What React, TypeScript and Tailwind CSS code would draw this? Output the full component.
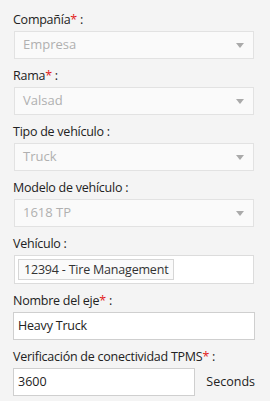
const selects = [
  { label: "Compañía", required: true, value: "Empresa" },
  { label: "Rama", required: true, value: "Valsad" },
  { label: "Tipo de vehículo", required: false, value: "Truck" },
  { label: "Modelo de vehículo", required: false, value: "1618 TP" },
];

const Label = ({ text, required }: { text: string; required?: boolean }) => (
  <div className="h-[18px] leading-[18px] mb-[2px] text-[#222] text-[12.5px] tracking-[-0.25px]">
    {text}
    {required && <span className="text-[#e21b1b]">*</span>} :
  </div>
);

export default function App() {
  return (
    <div
      className="w-[270px] h-[401px] bg-[#f4f4f4] pl-[13px] pr-[15px] pt-[11px] text-[13px] overflow-hidden"
      style={{ fontFamily: '"Open Sans", sans-serif' }}
    >
      {selects.map((s) => (
        <div key={s.label} className="mb-[8px]">
          <Label text={s.label} required={s.required} />
          <div className="mx-px h-[28px] border border-[#e2e2e2] bg-[#fafafa] flex items-center justify-between pl-[8px] pr-[9px]">
            <span className="text-[#b0b0b0] text-[13px]">{s.value}</span>
            <span className="w-0 h-0 border-l-[4px] border-r-[4px] border-t-[5px] border-l-transparent border-r-transparent border-t-[#aaa]" />
          </div>
        </div>
      ))}

      <div className="mb-[8px]">
        <Label text="Vehículo" />
        <div className="mx-px h-[29px] border border-[#dcdcdc] bg-white flex items-center px-[3px]">
          <span className="h-[21px] leading-[19px] border border-[#d6d6d6] bg-[#fafafa] px-[5px] text-[#333] text-[12.5px] tracking-[-0.2px]">
            12394 - Tire Management
          </span>
        </div>
      </div>

      <div className="mb-[8px]">
        <Label text="Nombre del eje" required />
        <div className="h-[28px] border border-[#cfcfcf] bg-white flex items-center px-[4px] text-[#222] text-[12.5px] tracking-[-0.2px]">
          Heavy Truck
        </div>
      </div>

      <div>
        <Label text="Verificación de conectividad TPMS" required />
        <div className="flex items-center">
          <div className="w-[182px] h-[28px] border border-[#cfcfcf] bg-white flex items-center px-[4px] text-[#222] text-[12.5px]">
            3600
          </div>
          <span className="ml-auto text-[#222] text-[12.5px]">Seconds</span>
        </div>
      </div>
    </div>
  );
}
